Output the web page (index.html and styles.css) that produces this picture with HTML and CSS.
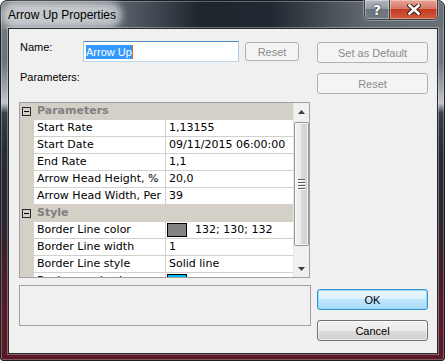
FILE: index.html
```html
<!DOCTYPE html>
<html lang="en">

<head>
    <meta charset="UTF-8">
    <title>Arrow Up Properties</title>
    <link rel="stylesheet" href="styles.css">
</head>

<body>
    <div class="window">
        <div class="titlebar">
            <span class="title">Arrow Up Properties</span>
            <div class="caption-buttons">
                <div class="cap-btn help">?</div>
                <div class="cap-btn close">
                    <svg width="14" height="11" viewBox="0 0 14 11">
                        <path d="M2.5 1.5 L11.5 9.5 M11.5 1.5 L2.5 9.5" stroke="#3b1a14" stroke-width="4.6" stroke-linecap="square" />
                        <path d="M2.5 1.5 L11.5 9.5 M11.5 1.5 L2.5 9.5" stroke="#ffffff" stroke-width="2.6" stroke-linecap="square" />
                    </svg>
                </div>
            </div>
        </div>

        <div class="client">
            <div class="left-col">
                <div class="name-row">
                    <label class="lbl name-lbl">Name:</label>
                    <div class="textbox"><span class="sel">Arrow Up</span><span class="caret"></span></div>
                    <button class="btn small" disabled>Reset</button>
                </div>

                <div class="lbl params-lbl">Parameters:</div>

                <div class="propgrid">
                    <div class="pg-rows">
                        <div class="pg-cat">
                            <div class="gutter"><span class="minus"></span></div>
                            <span class="cat-name">Parameters</span>
                        </div>
                        <div class="pg-row"><div class="gutter"></div><div class="name">Start Rate</div><div class="value">1,13155</div></div>
                        <div class="pg-row"><div class="gutter"></div><div class="name">Start Date</div><div class="value">09/11/2015 06:00:00</div></div>
                        <div class="pg-row"><div class="gutter"></div><div class="name">End Rate</div><div class="value">1,1</div></div>
                        <div class="pg-row"><div class="gutter"></div><div class="name">Arrow Head Height, %</div><div class="value">20,0</div></div>
                        <div class="pg-row"><div class="gutter"></div><div class="name">Arrow Head Width, Per</div><div class="value">39</div></div>
                        <div class="pg-cat">
                            <div class="gutter"><span class="minus"></span></div>
                            <span class="cat-name">Style</span>
                        </div>
                        <div class="pg-row"><div class="gutter"></div><div class="name">Border Line color</div><div class="value"><span class="swatch grey"></span>132; 130; 132</div></div>
                        <div class="pg-row"><div class="gutter"></div><div class="name">Border Line width</div><div class="value">1</div></div>
                        <div class="pg-row"><div class="gutter"></div><div class="name">Border Line style</div><div class="value">Solid line</div></div>
                        <div class="pg-row"><div class="gutter"></div><div class="name">Background color</div><div class="value"><span class="swatch cyan"></span></div></div>
                    </div>
                    <div class="scrollbar">
                        <div class="sb-btn">
                            <svg width="7" height="4" viewBox="0 0 7 4"><path d="M0 4 L3.5 0 L7 4 Z" fill="#3c3c3c" /></svg>
                        </div>
                        <div class="sb-thumb">
                            <span class="grip"></span><span class="grip"></span><span class="grip"></span><span class="grip"></span>
                        </div>
                        <div class="sb-track"></div>
                        <div class="sb-btn">
                            <svg width="7" height="4" viewBox="0 0 7 4"><path d="M0 0 L3.5 4 L7 0 Z" fill="#3c3c3c" /></svg>
                        </div>
                    </div>
                </div>

                <div class="desc"></div>
            </div>

            <div class="right-col">
                <button class="btn" disabled>Set as Default</button>
                <button class="btn gap" disabled>Reset</button>
                <button class="btn default ok">OK</button>
                <button class="btn gap">Cancel</button>
            </div>
        </div>
    </div>
</body>

</html>
```

FILE: styles.css
```css
* {
    box-sizing: border-box;
}

body {
    margin: 0;
    background: #ffffff;
}

.window {
    width: 445px;
    height: 361px;
    display: flex;
    flex-direction: column;
    padding: 0 6px 6px 7px;
    border: 1px solid #1c1f25;
    border-radius: 7px 7px 3px 3px;
    background:
        linear-gradient(to right, #7d848b 0, #747b83 80px, #4a525c 140px, #1f252d 200px, #222831 270px, #4a5159 330px, #60676e 365px, #6a7077 100%) top / 100% 28px no-repeat,
        linear-gradient(to bottom, #767d85 0, #6c737a 60px, #a2a7ac 88px, #c3c7cb 102px, #39404a 112px, #272c34 150px, #2a2730 210px, #481d29 280px, #5a1b27 330px, #571a26 100%);
    box-shadow: inset 0 0 0 1px rgba(255, 255, 255, 0.28);
}

/* title bar */

.titlebar {
    height: 27px;
    display: flex;
    justify-content: space-between;
    align-items: flex-start;
}

.title {
    margin-top: 7px;
    font-family: "Liberation Sans", Arial, sans-serif;
    font-size: 12px;
    line-height: 14px;
    color: #000000;
    background: rgba(226, 229, 232, 0.72);
    border-radius: 8px;
    box-shadow: 0 0 7px 6px rgba(226, 229, 232, 0.72);
}

.caption-buttons {
    display: flex;
    margin-top: -1px;
    height: 20px;
    border: 1px solid #3a3f46;
    border-top: none;
    border-radius: 0 0 5px 5px;
    overflow: hidden;
    box-shadow: 0 0 0 1px rgba(255, 255, 255, 0.3);
}

.cap-btn {
    display: flex;
    align-items: center;
    justify-content: center;
    box-shadow: inset 0 0 0 1px rgba(255, 255, 255, 0.35);
}

.help {
    width: 25px;
    border-right: 1px solid #3a3f46;
    background: linear-gradient(to bottom, #b3b8be 0, #959ba2 45%, #6c747b 50%, #747c83 100%);
    font-family: "DejaVu Sans", sans-serif;
    font-weight: bold;
    font-size: 14px;
    color: #ffffff;
    text-shadow: 0 0 2px #2c3036, 0 0 1px #2c3036;
}

.close {
    width: 47px;
    background: linear-gradient(to bottom, #e7a597 0, #d77866 45%, #c23c22 50%, #d25a3e 100%);
}

/* client area */

.client {
    flex: 1;
    display: flex;
    gap: 7px;
    padding: 12px 9px 12px 10px;
    border: 1px solid #272b31;
    background: #f0f0f0;
    box-shadow: 0 0 0 1px rgba(255, 255, 255, 0.32);
    font-family: "Liberation Sans", Arial, sans-serif;
    font-size: 11px;
}

.left-col {
    width: 291px;
    display: flex;
    flex-direction: column;
}

.right-col {
    width: 111px;
    display: flex;
    flex-direction: column;
    padding-top: 1px;
}

.lbl {
    line-height: 13px;
    color: #000000;
}

.name-row {
    display: flex;
    align-items: flex-start;
    height: 21px;
}

.name-lbl {
    width: 64px;
    padding-left: 1px;
}

.params-lbl {
    margin-top: 9px;
    padding-left: 1px;
}

.textbox {
    width: 156px;
    height: 21px;
    display: flex;
    align-items: center;
    padding-left: 2px;
    background: #ffffff;
    border: 1px solid;
    border-color: #4a8ac4 #a9cbe8 #b9d8ee #a9cbe8;
}

.sel {
    background: #3399ff;
    color: #ffffff;
    line-height: 14px;
}

.caret {
    width: 1px;
    height: 14px;
    background: #cc6a1e;
}

/* buttons */

.btn {
    height: 21px;
    padding: 0;
    font-family: "Liberation Sans", Arial, sans-serif;
    font-size: 11px;
    color: #000000;
    border: 1px solid #707070;
    border-radius: 3px;
    background: linear-gradient(to bottom, #f2f2f2 0, #ebebeb 50%, #dddddd 50%, #cfcfcf 100%);
    box-shadow: inset 0 0 0 1px rgba(255, 255, 255, 0.6);
}

.btn:disabled {
    color: #8b8b8b;
    border-color: #adb2b5;
    background: #f4f4f4;
    box-shadow: none;
}

.btn.small {
    width: 54px;
    height: 19px;
    margin-left: 6px;
    margin-top: 1px;
}

.btn.gap {
    margin-top: 10px;
}

.btn.ok {
    margin-top: auto;
}

.btn.default {
    border-color: #3a8fd0;
    background: linear-gradient(to bottom, #eaf6fd 0, #d9f0fc 50%, #bee6fd 50%, #a9dbf6 100%);
    box-shadow: inset 0 0 0 1px #8fdcfb;
}

/* property grid */

.propgrid {
    margin-top: 18px;
    height: 176px;
    display: flex;
    border: 1px solid #a0a0a0;
    background: #ffffff;
    font-family: "DejaVu Sans", Verdana, sans-serif;
    font-size: 11px;
    color: #000000;
}

.pg-rows {
    flex: 1;
    overflow: hidden;
}

.pg-row,
.pg-cat {
    display: flex;
    height: 17px;
    line-height: 16px;
    border-bottom: 1px solid #d4d0c8;
    white-space: nowrap;
}

.pg-cat {
    background: #d4d0c8;
}

.gutter {
    width: 14px;
    flex: none;
    background: #d4d0c8;
}

.minus {
    position: relative;
    display: block;
    width: 9px;
    height: 9px;
    margin: 4px 0 0 2px;
    border: 1px solid #2a2a2a;
}

.minus::after {
    content: "";
    position: absolute;
    left: 1px;
    top: 3px;
    width: 5px;
    height: 1px;
    background: #000000;
}

.cat-name {
    padding-left: 3px;
    font-weight: bold;
    color: #808080;
}

.name {
    width: 132px;
    flex: none;
    padding-left: 3px;
    border-right: 1px solid #d4d0c8;
    overflow: hidden;
}

.value {
    flex: 1;
    display: flex;
    align-items: flex-start;
    padding-left: 3px;
    overflow: hidden;
}

.swatch {
    width: 20px;
    height: 14px;
    margin: 1px 8px 0 -2px;
    border: 1px solid #000000;
    flex: none;
}

.swatch.grey {
    background: #848284;
}

.swatch.cyan {
    background: #00bfff;
}

.scrollbar {
    width: 16px;
    display: flex;
    flex-direction: column;
    background: #f0f0f0;
    border-left: 1px solid #e6e6e6;
}

.sb-btn {
    height: 17px;
    display: flex;
    align-items: center;
    justify-content: center;
}

.sb-thumb {
    height: 124px;
    margin: 2px 0 0 0;
    display: flex;
    flex-direction: column;
    align-items: center;
    justify-content: center;
    gap: 1px;
    border: 1px solid #979797;
    border-radius: 2px;
    background: linear-gradient(to right, #f3f3f3 0, #e9e9e9 50%, #d9d9d9 50%, #d3d3d3 100%);
    box-shadow: inset 0 0 0 1px rgba(255, 255, 255, 0.7);
}

.grip {
    width: 7px;
    height: 2px;
    border-top: 1px solid #5f5f5f;
    border-bottom: 1px solid #ffffff;
}

.sb-track {
    flex: 1;
}

.desc {
    margin-top: 7px;
    width: 292px;
    height: 41px;
    border: 1px solid #a0a0a0;
}
```
